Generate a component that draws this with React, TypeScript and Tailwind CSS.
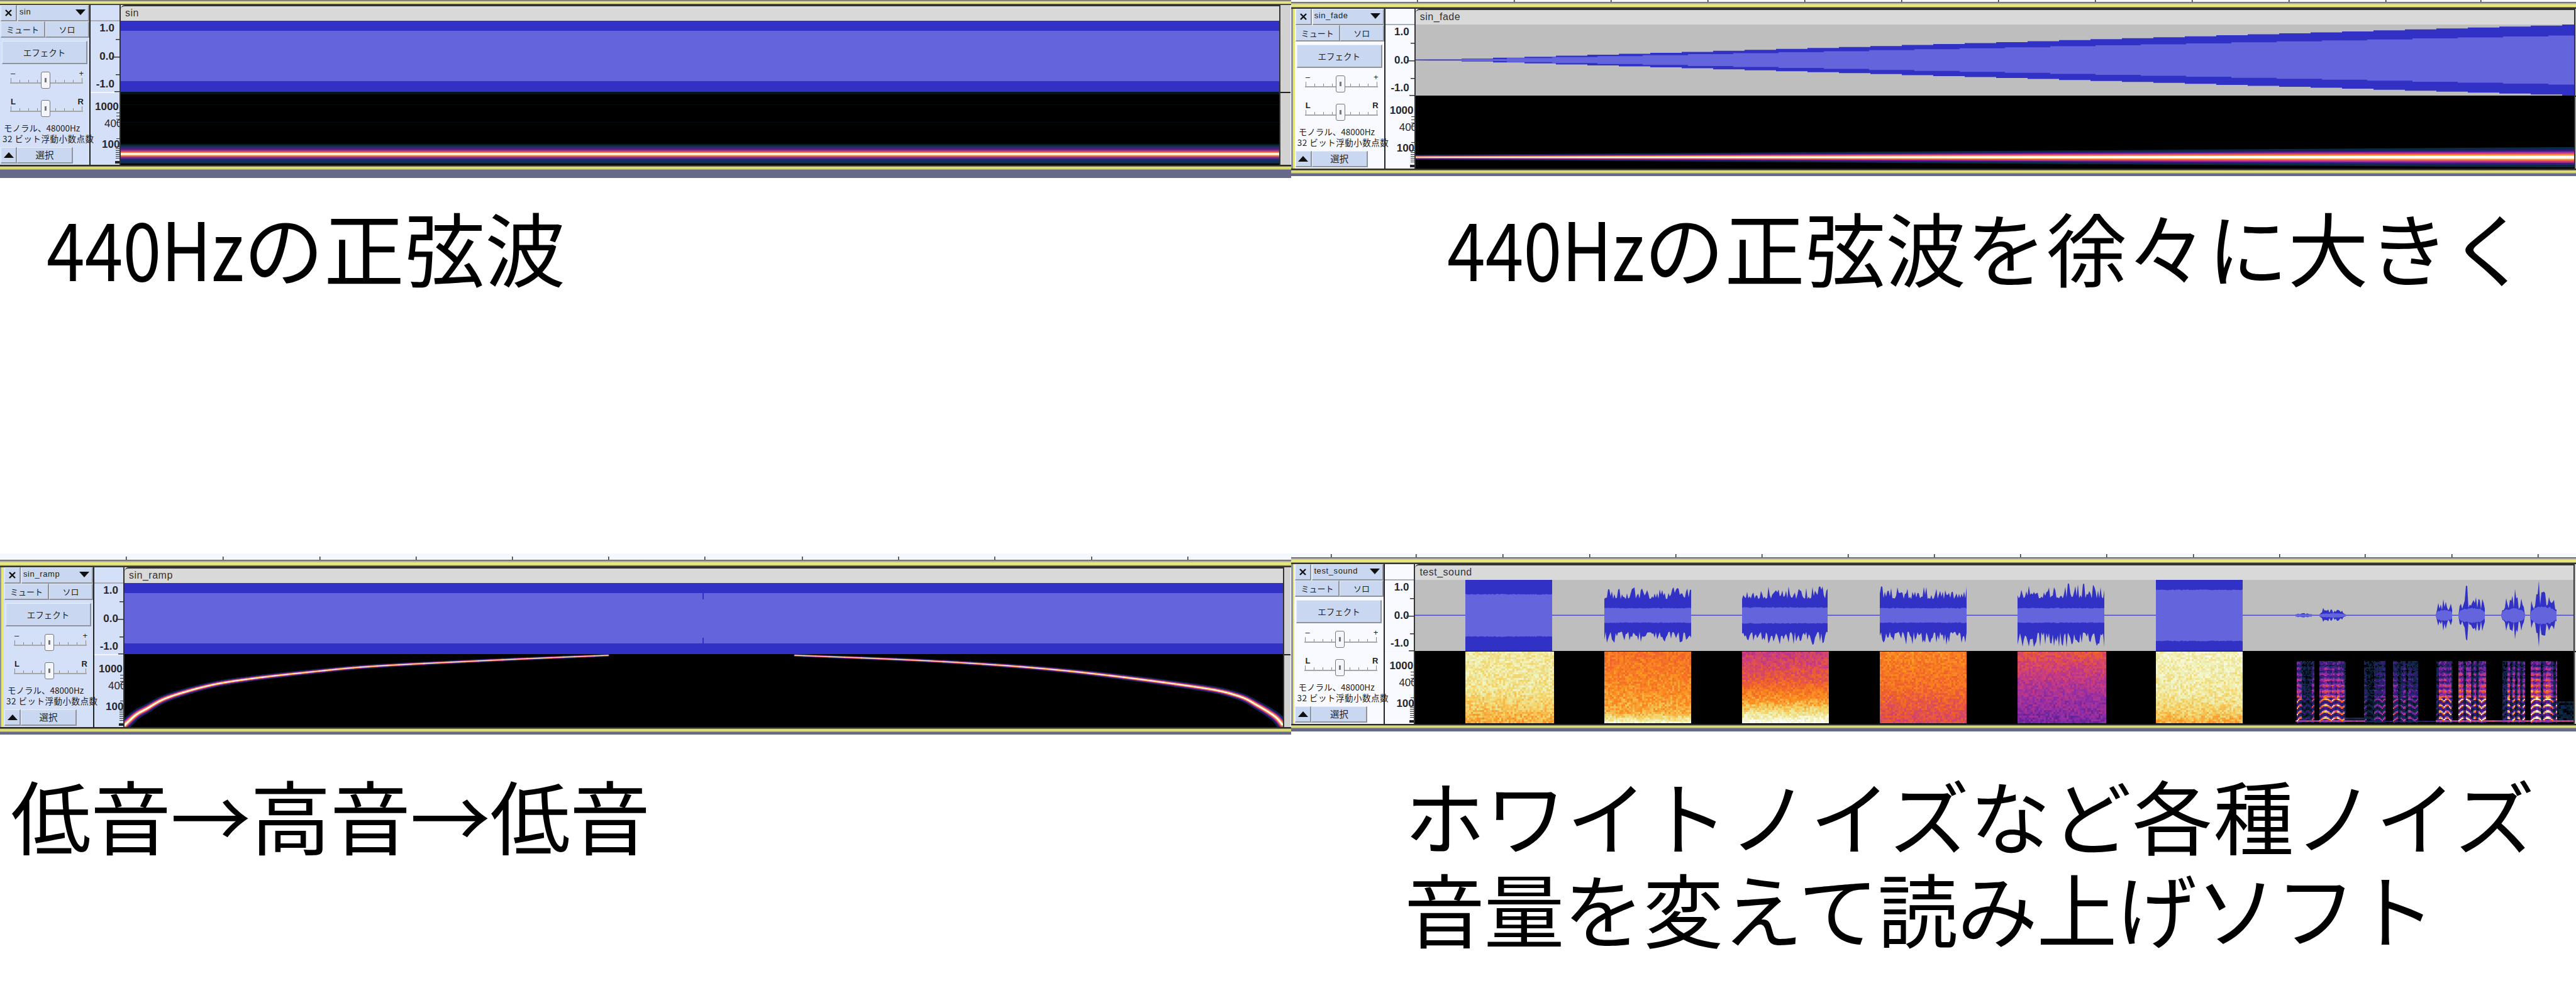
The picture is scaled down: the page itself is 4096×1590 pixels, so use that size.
import React from "react";

const jp = "font-['Noto_Sans_CJK_JP','Noto_Sans',sans-serif]";
const DARK = "#3131c6";
const LIGHT = "#6464dc";

// simple seeded random so the noise is the same on every load
function rng(seed: number) {
  let s = seed;
  return () => {
    s = (s * 16807) % 2147483647;
    return s / 2147483647;
  };
}

const stops: [number, number[]][] = [
  [0, [0, 0, 0]],
  [0.12, [10, 42, 68]],
  [0.25, [58, 26, 128]],
  [0.38, [138, 44, 168]],
  [0.5, [200, 58, 128]],
  [0.62, [240, 96, 44]],
  [0.72, [251, 140, 30]],
  [0.82, [244, 208, 96]],
  [0.9, [238, 238, 176]],
  [1, [255, 255, 255]],
];

function colorOf(v: number) {
  for (let i = 1; i < stops.length; i++) {
    if (v <= stops[i][0]) {
      const [a, ca] = stops[i - 1];
      const [b, cb] = stops[i];
      const t = (v - a) / (b - a);
      return `rgb(${ca.map((c, k) => Math.round(c + (cb[k] - c) * t)).join(",")})`;
    }
  }
  return "rgb(255,255,255)";
}

// cells are grouped by colour level into one path each
function toPaths(cells: { x: number; y: number; w: number; h: number; v: number }[]) {
  const levels: Record<number, string> = {};
  for (const c of cells) {
    const l = Math.max(0, Math.min(60, Math.round(c.v * 60)));
    levels[l] = (levels[l] || "") + `M${c.x} ${c.y}h${c.w}v${c.h}h-${c.w}z`;
  }
  return Object.keys(levels).map((k) => ({ fill: colorOf(Number(k) / 60), d: levels[Number(k)] }));
}

const lerpCurve = (pts: number[][], t: number) => {
  for (let i = 1; i < pts.length; i++) {
    if (t <= pts[i][0]) {
      const k = (t - pts[i - 1][0]) / (pts[i][0] - pts[i - 1][0]);
      return pts[i - 1][1] + (pts[i][1] - pts[i - 1][1]) * k;
    }
  }
  return pts[pts.length - 1][1];
};

const X0 = 2251;
const noiseBlocks = [
  { a: 2331, b: 2470, base: 56.5, spike: 0, light: 33, c: [[0, 0.89], [0.5, 0.87], [0.75, 0.82], [1, 0.76]] },
  { a: 2552, b: 2690, base: 26, spike: 19, light: 11, c: [[0, 0.66], [0.5, 0.71], [0.85, 0.77], [0.95, 0.88], [1, 0.97]] },
  { a: 2771, b: 2908, base: 26, spike: 21, light: 12, c: [[0, 0.5], [0.4, 0.6], [0.65, 0.72], [0.82, 0.84], [1, 0.98]] },
  { a: 2990, b: 3128, base: 26, spike: 21, light: 11, c: [[0, 0.7], [0.5, 0.65], [1, 0.55]] },
  { a: 3209, b: 3348, base: 27, spike: 24, light: 11, c: [[0, 0.58], [0.5, 0.45], [1, 0.35]] },
  { a: 3429, b: 3567, base: 56.5, spike: 0, light: 40, c: [[0, 0.92], [0.6, 0.88], [0.85, 0.82], [1, 0.76]] },
];
const speechWave = [
  [3651, 3678, 5, 0, 0],
  [3689, 3731, 10, 3695, 12],
  [3874, 3901, 26, 0, 0],
  [3910, 3953, 36, 3923, 47],
  [3978, 4016, 34, 4000, 42],
  [4024, 4067, 42, 4038, 55],
];
const speechSpec = [
  [3653, 3680, 0.84],
  [3689, 3731, 0.9],
  [3760, 3793, 0.48],
  [3806, 3846, 0.52],
  [3875, 3901, 1],
  [3910, 3953, 1.04],
  [3980, 4016, 0.98],
  [4025, 4067, 1.04],
];

function buildSoundSpec() {
  const r = rng(4711);
  const cells: { x: number; y: number; w: number; h: number; v: number }[] = [];
  for (const b of noiseBlocks) {
    for (let x = b.a; x < b.b; x += 3) {
      for (let y = 1; y < 114; y += 3) {
        const v = lerpCurve(b.c, y / 114) + (r() - 0.5) * 0.11;
        cells.push({ x: x - X0, y, w: 3, h: 3, v });
      }
    }
  }
  for (const [a, b, lv] of speechSpec) {
    let col = 1;
    for (let x = a; x < b; x += 2) {
      if ((x - a) % 4 === 0) col = r() < 0.22 ? 0.3 : 0.7 + r() * 0.4;
      for (let y = 16; y < 113; y += 2) {
        const f = (113 - y) / 97;
        const chev = 5 * Math.abs(Math.sin(((x - a) / (b - a)) * Math.PI * 2.4));
        let v;
        if (f < 0.42) {
          // low end: the bright wavy harmonics
          const harm = Math.pow(0.5 + 0.5 * Math.cos(((y + chev) / 10) * Math.PI * 2), 3);
          v = lv * col * (0.26 + harm * (0.85 - f * 0.3)) + (r() - 0.5) * 0.1;
        } else {
          const harm = 0.5 + 0.5 * Math.cos((y / 9) * Math.PI * 2);
          v = lv * col * (0.72 - (f - 0.42) * 0.62) * (0.55 + harm * 0.45) + (r() - 0.5) * 0.2;
        }
        cells.push({ x: x - X0, y, w: 2, h: 2, v: Math.max(0, v) });
      }
    }
  }
  for (let x = 3651; x < 3760; x += 3) cells.push({ x: x - X0, y: 110, w: 3, h: 3, v: 0.38 + r() * 0.1 });
  for (let x = 3760; x < 3874; x += 3) cells.push({ x: x - X0, y: 111, w: 3, h: 2, v: 0.12 + r() * 0.12 });
  for (let x = 3874; x < 4092; x += 3) cells.push({ x: x - X0, y: 110, w: 3, h: 3, v: 0.4 + r() * 0.14 });
  for (let x = 3731; x < 3760; x += 3) cells.push({ x: x - X0, y: 106, w: 3, h: 3, v: 0.1 + r() * 0.1 });
  for (let x = 4067; x < 4092; x += 3)
    for (let y = 80; y < 110; y += 3) cells.push({ x: x - X0, y, w: 3, h: 3, v: r() * 0.14 });
  return toPaths(cells);
}

function envelopePath(cols: { x: number; t: number; b: number }[]) {
  if (!cols.length) return "";
  const top = cols.map((c) => `${c.x} ${56.5 - c.t}`).join("L");
  const bot = cols.slice().reverse().map((c) => `${c.x} ${56.5 + c.b}`).join("L");
  return `M${top}L${bot}z`;
}

function buildSoundWave() {
  const r = rng(99);
  let dark = "";
  let light = "";
  for (const b of noiseBlocks) {
    const dc = [];
    const lc = [];
    for (let x = b.a; x <= b.b; x += 2) {
      dc.push({
        x: x - X0,
        t: b.base + Math.pow(r(), 1.6) * b.spike,
        b: b.base + Math.pow(r(), 1.6) * b.spike,
      });
      const l = b.light + r() * 1.2;
      lc.push({ x: x - X0, t: l, b: l });
    }
    dark += envelopePath(dc);
    light += envelopePath(lc);
  }
  for (const [a, c, peak, sx, sAmp] of speechWave) {
    const dc = [];
    const lc = [];
    for (let x = a; x <= c; x += 2) {
      const t = (x - a) / (c - a);
      const shape = Math.pow(Math.sin(Math.PI * t), 0.3);
      let amp = peak * shape * (0.3 + 0.7 * r());
      if (sx && Math.abs(x - sx) < 2) amp = sAmp;
      dc.push({ x: x - X0, t: amp, b: amp * (0.8 + r() * 0.2) });
      const l = Math.max(2, peak * 0.36 * shape * (0.75 + 0.25 * r()));
      lc.push({ x: x - X0, t: l, b: l });
    }
    dark += envelopePath(dc);
    light += envelopePath(lc);
  }
  return { dark, light };
}

function buildFade() {
  const W = 1842;
  let dark = "M0 56";
  let dBot = "";
  for (let x = 23; x < W + 50; x += 50) {
    const amp = Math.max(0.8, (x / W) * 57);
    const xe = Math.min(W, x + 50);
    dark += `L${x} ${56.5 - amp}L${xe} ${56.5 - amp}`;
    dBot = `L${xe} ${56.5 + amp}L${x} ${56.5 + amp}` + dBot;
  }
  let light = `M73 56`;
  let lBot = "";
  for (let x = 73; x < W + 70; x += 72) {
    const amp = (x / W) * 40;
    const xe = Math.min(W, x + 72);
    light += `L${x} ${56.5 - amp}L${xe} ${56.5 - amp}`;
    lBot = `L${xe} ${56.5 + amp}L${x} ${56.5 + amp}` + lBot;
  }
  return { dark: dark + dBot + "L0 57z", light: light + lBot + "L73 57z" };
}

const soundSpec = buildSoundSpec();
const soundWave = buildSoundWave();
const fade = buildFade();

// sweep curve of sin_ramp, points in the track's own x and y
const rampLeft = [[0, 113], [2, 111], [19, 96], [35, 87], [69, 69], [135, 50], [202, 39], [300, 28], [402, 19], [602, 9], [769, 2]];
const rampRight = [[1066, 2], [1302, 12], [1502, 27], [1702, 52], [1769, 66], [1802, 82], [1829, 99], [1841, 112]];

function densify(pts: number[][]) {
  const out: number[][] = [];
  for (let i = 0; i < pts.length - 1; i++) {
    const p0 = pts[Math.max(0, i - 1)];
    const p1 = pts[i];
    const p2 = pts[i + 1];
    const p3 = pts[Math.min(pts.length - 1, i + 2)];
    for (let k = 0; k < 10; k++) {
      const t = k / 10;
      const f = (a: number, b: number, c: number, d: number) =>
        0.5 * (2 * b + (c - a) * t + (2 * a - 5 * b + 4 * c - d) * t * t + (3 * b - a - 3 * c + d) * t * t * t);
      out.push([f(p0[0], p1[0], p2[0], p3[0]), f(p0[1], p1[1], p2[1], p3[1])]);
    }
  }
  out.push(pts[pts.length - 1]);
  return out;
}

const bandLayers = [
  { c: "#0a2a44", w: 14 },
  { c: "#3a1a80", w: 10.5 },
  { c: "#a02c9c", w: 8 },
  { c: "#e0506a", w: 6 },
  { c: "#fb9a2c", w: 4.2 },
  { c: "#ffffff", w: 2.2 },
];

function Ramp() {
  const segs = [densify(rampLeft), densify(rampRight)];
  return (
    <svg width="1842" height="116" className="block bg-black">
      {bandLayers.map((l) =>
        segs.map((pts, n) =>
          pts.slice(1).map((p, i) => {
            const scale = 0.3 + (Math.max(0, p[1]) / 113) * 0.95;
            return (
              <line
                key={l.c + n + i}
                x1={pts[i][0]}
                y1={pts[i][1]}
                x2={p[0]}
                y2={p[1]}
                stroke={l.c}
                strokeWidth={l.w * scale}
                strokeLinecap="round"
              />
            );
          })
        )
      )}
    </svg>
  );
}

function Tone() {
  return (
    <svg width="1842" height="116" className="block bg-black">
      <defs>
        <linearGradient id="toneBand" x1="0" y1="0" x2="0" y2="1">
          <stop offset="0" stopColor="#000" />
          <stop offset="0.12" stopColor="#0b3148" />
          <stop offset="0.3" stopColor="#5a1c8c" />
          <stop offset="0.42" stopColor="#e0506a" />
          <stop offset="0.47" stopColor="#fbb040" />
          <stop offset="0.5" stopColor="#ffffff" />
          <stop offset="0.54" stopColor="#ffffff" />
          <stop offset="0.6" stopColor="#fb9a2c" />
          <stop offset="0.68" stopColor="#a02c9c" />
          <stop offset="0.8" stopColor="#1a2a70" />
          <stop offset="1" stopColor="#08304a" />
        </linearGradient>
      </defs>
      <rect x="0" y="0" width="1842" height="4" fill="#02181e" />
      <rect x="0" y="20" width="1842" height="1" fill="#021014" />
      <rect x="0" y="48" width="1842" height="1" fill="#021014" />
      <rect x="0" y="82" width="1842" height="32" fill="url(#toneBand)" />
    </svg>
  );
}

function FadeSpec() {
  const W = 1842;
  const C = 98;
  return (
    <svg width="1842" height="116" className="block bg-black">
      {bandLayers.map((l) => {
        const w0 = l.w * 0.28;
        const w1 = l.w * 1.15;
        return (
          <polygon
            key={l.c}
            fill={l.c}
            points={`0 ${C - w0} ${W} ${C - w1} ${W} ${C + w1} 0 ${C + w0}`}
          />
        );
      })}
    </svg>
  );
}

function SolidWave({ notch }: { notch?: boolean }) {
  return (
    <svg width="1842" height="113" className="block">
      <rect width="1842" height="113" fill={DARK} />
      <rect y="16" width="1842" height="80" fill={LIGHT} />
      {notch && (
        <>
          <rect x="919" y="15" width="2" height="11" fill={DARK} />
          <rect x="919" y="87" width="2" height="11" fill={DARK} />
        </>
      )}
    </svg>
  );
}

function FadeWave() {
  return (
    <svg width="1842" height="113" className="block bg-[#bebebe]">
      <rect y="55.5" width="1842" height="1.5" fill="#4c4cd4" />
      <path d={fade.dark} fill={DARK} />
      <path d={fade.light} fill={LIGHT} />
    </svg>
  );
}

function SoundWave() {
  return (
    <svg width="1842" height="113" className="block bg-[#bebebe]">
      <rect y="55.5" width="1842" height="1.5" fill="#4c4cd4" />
      <path d={soundWave.dark} fill={DARK} />
      <path d={soundWave.light} fill={LIGHT} />
    </svg>
  );
}

function SoundSpec() {
  return (
    <svg width="1842" height="116" className="block bg-black">
      <defs>
        <filter id="soft" x="0" y="0" width="100%" height="100%">
          <feGaussianBlur stdDeviation="0.7" />
        </filter>
      </defs>
      <g filter="url(#soft)">
        {soundSpec.map((p) => (
          <path key={p.fill} d={p.d} fill={p.fill} />
        ))}
      </g>
    </svg>
  );
}

const bevel = "bg-[#c9d8f0] border-t border-l border-t-[#e6eefc] border-l-[#e6eefc] border-r-2 border-b-2 border-r-[#8f939c] border-b-[#8f939c]";

function Slider({ left, right, bold }: { left: string; right: string; bold?: boolean }) {
  return (
    <div className="relative h-[30px] w-[120px] ml-[15px]">
      <div className={`flex justify-between px-[2px] text-[13px] leading-[12px] text-[#222] font-['Liberation_Sans',sans-serif] ${bold ? "font-bold text-[12px]" : ""}`}>
        <span>{left}</span>
        <span>{right}</span>
      </div>
      <svg width="116" height="10" className="block ml-[1px] mt-[1px]">
        {[1, 15, 29, 43, 72, 86, 100, 114].map((x) => (
          <rect key={x} x={x} y={x === 1 || x === 114 ? 0 : 3} width="1" height={x === 1 || x === 114 ? 7 : 4} fill="#8a8a8a" />
        ))}
        <rect x="0" y="7" width="116" height="2" fill="#a8a8a8" />
      </svg>
      <div className="absolute left-[50px] top-[3px] h-[27px] w-[15px] rounded-[3px] border border-[#777] bg-[#f4f6fb] flex items-center justify-center">
        <div className="h-[7px] w-[3px] bg-[#777]" />
      </div>
    </div>
  );
}

function Controls({ name, tint }: { name: string; tint: string }) {
  return (
    <div className={`relative z-10 w-[144px] h-[254px] shrink-0 flex flex-col border-r-2 border-r-[#222] ${tint} ${jp} text-[#222]`}>
      <div className="flex h-[26px] shrink-0">
        <div className={`${bevel} w-[26px] ml-[1px] flex items-center justify-center`}>
          <svg width="13" height="13" viewBox="0 0 13 13">
            <path d="M2 2l9 9M11 2l-9 9" stroke="#111" strokeWidth="2.4" />
          </svg>
        </div>
        <div className={`${bevel} flex-1 ml-[1px] flex justify-between pl-[2px] pr-[3px] pt-[3px] text-[13px] leading-[14px] tracking-[0.6px] font-['Liberation_Sans',sans-serif]`}>
          <span>{name}</span>
          <svg width="18" height="9" viewBox="0 0 18 9" className="mt-[3px]">
            <path d="M1 0h16l-8 9z" fill="#111" />
          </svg>
        </div>
      </div>
      <div className="flex h-[26px] shrink-0 text-[13px] leading-[24px] text-center">
        <div className={`${bevel} w-[71px] ml-[1px]`}>ミュート</div>
        <div className={`${bevel} flex-1`}>ソロ</div>
      </div>
      <div className={`${bevel} h-[37px] mt-[5px] mx-[3px] w-[136px] shrink-0 text-center text-[13.5px] leading-[34px]`}>エフェクト</div>
      <div className="mt-[9px] flex flex-col gap-[15px]">
        <Slider left="–" right="+" />
        <Slider left="L" right="R" bold />
      </div>
      <div className="mt-[9px] text-[13.5px] leading-[17px] whitespace-nowrap">
        <div className="pl-[6px]">モノラル、48000Hz</div>
        <div className="pl-[4px] tracking-[0.5px]">32 ビット浮動小数点数</div>
      </div>
      <div className="absolute left-0 bottom-[2px] flex h-[26px] w-[116px]">
        <div className={`${bevel} w-[26px] ml-[1px] flex items-center justify-center`}>
          <svg width="18" height="9" viewBox="0 0 18 9">
            <path d="M1 9h16L9 0z" fill="#111" />
          </svg>
        </div>
        <div className={`${bevel} flex-1 text-center text-[14.5px] leading-[22px]`}>選択</div>
      </div>
    </div>
  );
}

function Ruler({ tint }: { tint: string }) {
  const label = "absolute font-['Liberation_Sans',sans-serif] text-[17px] leading-[18px] font-bold text-[#26262e]";
  return (
    <div className={`relative w-[48px] h-[254px] shrink-0 overflow-hidden border-r-2 border-r-[#333] ${tint}`}>
      <div className="h-[26px] border-b-2 border-b-[#a9aeb8]" />
      <span className={`${label} right-[8px] top-[28px]`}>1.0</span>
      <span className={`${label} right-[8px] top-[73px]`}>0.0</span>
      <span className={`${label} right-[8px] top-[117px]`}>-1.0</span>
      <span className={`${label} left-[7px] top-[153px]`}>1000</span>
      <span className={`${label} left-[22px] top-[180px] font-normal text-[16px]`}>400</span>
      <span className={`${label} left-[18px] top-[213px]`}>100</span>
      <svg width="46" height="254" className="absolute left-0 top-0">
        <rect x="0" y="138" width="46" height="2" fill="#f4f7ff" />
        <rect x="40" y="54" width="6" height="1.5" fill="#333" />
        <rect x="34" y="82" width="12" height="1.5" fill="#333" />
        <rect x="40" y="110" width="6" height="1.5" fill="#333" />
        <rect x="38" y="137" width="8" height="1.5" fill="#333" />
        {[171, 176, 181, 186, 212].map((y) => (
          <rect key={y} x="41" y={y} width="5" height="1" fill="#333" />
        ))}
        {[225, 228, 231, 234, 237, 240, 243].map((y) => (
          <rect key={y} x="40" y={y} width="6" height="1" fill="#333" />
        ))}
        <rect x="39" y="248" width="7" height="4" fill="#222" />
      </svg>
    </div>
  );
}

function Track({
  name,
  tint,
  gutter,
  wave,
  spec,
  topTicks,
  tickStrip,
  topBar,
  bottomBar,
  band,
  rightGutter,
}: {
  name: string;
  tint: string;
  gutter: string;
  wave: React.ReactNode;
  spec: React.ReactNode;
  topTicks: number[];
  tickStrip: string;
  topBar: string;
  bottomBar: string;
  band: string;
  rightGutter: string;
}) {
  return (
    <div className="flex flex-col">
      <div className={`relative bg-[#f6f8ff] ${tickStrip}`}>
        <svg width="2043" height="10" className="absolute left-0 bottom-0">
          {topTicks.map((x) => (
            <rect key={x} x={x} y="5" width="1.5" height="5" fill="#333" />
          ))}
        </svg>
      </div>
      <div className={`${topBar} bg-[linear-gradient(to_bottom,#555_0%,#aaa_22%,#e8e87a_40%,#e8e87a_68%,#9a9a70_76%,#333_86%,#333_100%)]`} />
      <div className="flex h-[254px]">
        <div className={gutter} />
        <Controls name={name} tint={tint} />
        <Ruler tint={tint} />
        <div className="w-[1842px] shrink-0 flex flex-col">
          <div className="h-[25px] shrink-0 bg-[#d9d9d9] border-t-2 border-t-[#333] rounded-tl-[6px] pl-[7px] pt-[2px] text-[16px] leading-[18px] tracking-[0.5px] text-[#333] font-['Liberation_Sans',sans-serif]">
            {name}
          </div>
          {wave}
          {spec}
        </div>
        <div className={`${rightGutter} bg-[#d2d2d2] border-l-2 border-l-[#333] relative overflow-hidden`}>
          <div className="absolute left-0 right-0 top-[138px] h-[1.5px] bg-[#222]" />
        </div>
      </div>
      <div className={`${bottomBar} bg-[linear-gradient(to_bottom,#222_0%,#333_25%,#c8c870_40%,#e8e87a_60%,#c8c870_85%,#8a8a70_100%)]`} />
      <div className={`${band} bg-[#666a88]`} />
    </div>
  );
}

function Caption({ children, className }: { children: React.ReactNode; className: string }) {
  return (
    <div className={`${jp} text-[128px] leading-[148px] text-black whitespace-nowrap ${className}`}>{children}</div>
  );
}

const Hz = () => <span className="inline-block w-[313px] origin-left scale-x-[0.855]">440Hz</span>;

export default function App() {
  const bTicks = [200, 354, 508, 662, 816, 970, 1124, 1278, 1432, 1586, 1740, 1891];
  const cTicks = [200, 354, 508, 661, 814, 967, 1120, 1275, 1428, 1581, 1735, 1888];
  const dTicks = [63, 198, 336, 474, 611, 748, 885, 1022, 1159, 1296, 1434, 1571, 1707, 1845, 1982];
  return (
    <div className="w-[4096px] h-[1590px] overflow-hidden bg-white grid grid-cols-[2053px_2043px] grid-rows-[880px_710px]">
      <div className="overflow-hidden">
        <Track
          name="sin"
          tint="bg-[#d4e0f8]"
          gutter="w-0"
          wave={<SolidWave />}
          spec={<Tone />}
          topTicks={[]}
          tickStrip="h-0"
          topBar="h-[8px]"
          bottomBar="h-[8px]"
          band="h-[13px]"
          rightGutter="w-[18px]"
        />
        <Caption className="mt-[35px] pl-[74px]">
          <Hz />の正弦波
        </Caption>
      </div>
      <div className="overflow-hidden">
        <Track
          name="sin_fade"
          tint="bg-[#f8faff]"
          gutter="w-[7px] bg-[#e8e87a] border-l-[3px] border-l-[#8a8ea8]"
          wave={<FadeWave />}
          spec={<FadeSpec />}
          topTicks={bTicks}
          tickStrip="h-[3px]"
          topBar="h-[11px]"
          bottomBar="h-[8px]"
          band="h-[4px]"
          rightGutter="w-[4px]"
        />
        <Caption className="mt-[38px] pl-[248px]">
          <Hz />の正弦波を徐々に大きく
        </Caption>
      </div>
      <div className="overflow-hidden">
        <Track
          name="sin_ramp"
          tint="bg-[#d4e0f8]"
          gutter="w-[6px] bg-[#e8e87a] border-l-2 border-l-[#8a8ea8]"
          wave={<SolidWave notch />}
          spec={<Ramp />}
          topTicks={cTicks}
          tickStrip="h-[10px]"
          topBar="h-[12px]"
          bottomBar="h-[8px]"
          band="h-[4px]"
          rightGutter="w-[12px]"
        />
        <Caption className="mt-[53px] pl-[17px] tracking-[-1px]">低音→高音→低音</Caption>
      </div>
      <div className="overflow-hidden">
        <Track
          name="test_sound"
          tint="bg-[#f8faff]"
          gutter="w-[6px] bg-[#e8e87a] border-l-[3px] border-l-[#8a8ea8]"
          wave={<SoundWave />}
          spec={<SoundSpec />}
          topTicks={dTicks}
          tickStrip="h-[6px]"
          topBar="h-[11px]"
          bottomBar="h-[7px]"
          band="h-[5px]"
          rightGutter="w-[4px]"
        />
        <Caption className="mt-[58px] pl-[180px]">
          <div className="tracking-[1px]">ホワイトノイズなど各種ノイズ</div>
          <div className="tracking-[-1.5px]">音量を変えて読み上げソフト</div>
        </Caption>
      </div>
    </div>
  );
}
